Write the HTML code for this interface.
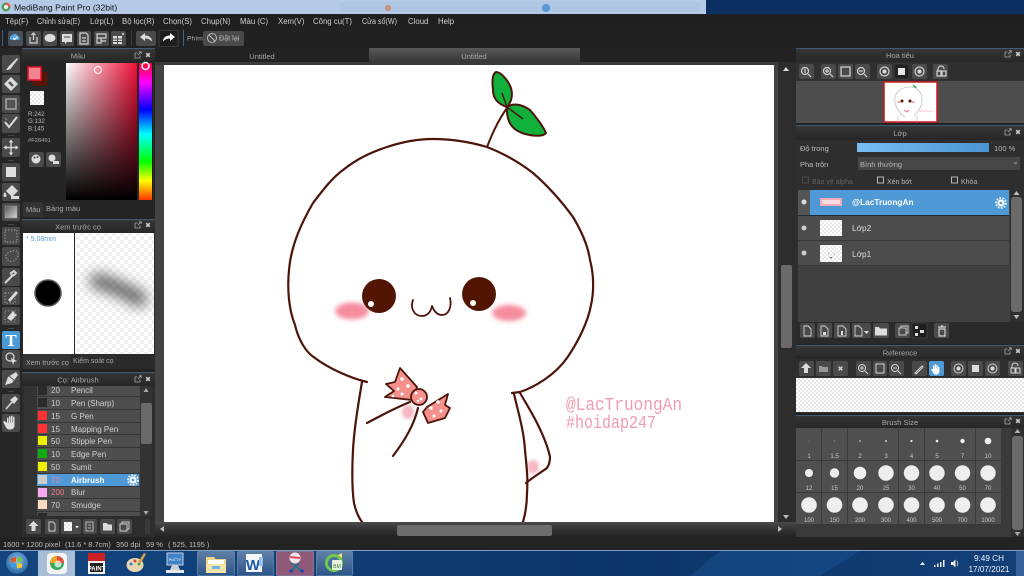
<!DOCTYPE html>
<html><head><meta charset="utf-8"><title>MediBang Paint Pro</title>
<style>
html,body{margin:0;padding:0;background:#222;width:1024px;height:576px;overflow:hidden}
svg{display:block;filter:blur(.35px)}
text{font-family:"Liberation Sans","Noto Sans CJK SC",sans-serif;font-size:7.5px;fill:#c8c8c8}
.m text{font-size:7.8px;fill:#cfcfcf}
.t{text-anchor:middle;fill:#a8a8a8}
.i{fill:none;stroke:#d4d4d4;stroke-width:1.2}
.f{fill:#dcdcdc}
.b{fill:#4a4a4a}
.l text{font-size:8px;fill:#d0d0d0}
.s text{font-size:6px;fill:#c9c9c9;text-anchor:middle}
</style></head><body>
<svg width="1024" height="576" viewBox="0 0 1024 576" xmlns="http://www.w3.org/2000/svg">
<defs>
<pattern id="ck" width="8" height="8" patternUnits="userSpaceOnUse"><rect width="8" height="8" fill="#fff"/><rect width="4" height="4" fill="#f0f0f0"/><rect x="4" y="4" width="4" height="4" fill="#f0f0f0"/></pattern>
<pattern id="ck2" width="4" height="4" patternUnits="userSpaceOnUse"><rect width="4" height="4" fill="#fff"/><rect width="2" height="2" fill="#e8e8e8"/><rect x="2" y="2" width="2" height="2" fill="#e8e8e8"/></pattern>
<linearGradient id="sv" x1="0" x2="1" y1="0" y2="0"><stop offset="0" stop-color="#fff"/><stop offset="1" stop-color="#f01038"/></linearGradient>
<linearGradient id="svb" x1="0" x2="0" y1="0" y2="1"><stop offset="0" stop-color="#000" stop-opacity="0"/><stop offset="1" stop-color="#000"/></linearGradient>
<linearGradient id="hue" x1="0" x2="0" y1="0" y2="1"><stop offset="0" stop-color="#f03"/><stop offset=".14" stop-color="#f0f"/><stop offset=".34" stop-color="#00f"/><stop offset=".52" stop-color="#0ff"/><stop offset=".72" stop-color="#0f0"/><stop offset=".86" stop-color="#ff0"/><stop offset="1" stop-color="#f30"/></linearGradient>
<linearGradient id="ttl" x1="0" x2="0" y1="0" y2="1"><stop offset="0" stop-color="#3d4348"/><stop offset=".15" stop-color="#343434"/><stop offset="1" stop-color="#272727"/></linearGradient>
<linearGradient id="tab" x1="0" x2="0" y1="0" y2="1"><stop offset="0" stop-color="#5a5a5a"/><stop offset="1" stop-color="#363636"/></linearGradient>
<linearGradient id="bar" x1="0" x2="1" y1="0" y2="0"><stop offset="0" stop-color="#79bdf2"/><stop offset="1" stop-color="#4b94d2"/></linearGradient>
<linearGradient id="grd" x1="0" x2="1" y1="0" y2="1"><stop offset="0" stop-color="#555"/><stop offset="1" stop-color="#d8d8d8"/></linearGradient>
<linearGradient id="tb" x1="0" x2="1" y1="0" y2="0"><stop offset="0" stop-color="#13457f"/><stop offset=".3" stop-color="#103e76"/><stop offset=".6" stop-color="#0d3567"/><stop offset="1" stop-color="#123f77"/></linearGradient>
<linearGradient id="tbi" x1="0" x2="0" y1="0" y2="1"><stop offset="0" stop-color="#5f7fa6"/><stop offset="1" stop-color="#2c5588"/></linearGradient>
<linearGradient id="hs" x1="0" x2="0" y1="0" y2="1"><stop offset="0" stop-color="#4a4a4a"/><stop offset=".5" stop-color="#333"/><stop offset="1" stop-color="#222"/></linearGradient>
<filter id="b1" x="-50%" y="-50%" width="200%" height="200%"><feGaussianBlur stdDeviation="2.5"/></filter>
<filter id="b2" x="-60%" y="-100%" width="220%" height="300%"><feGaussianBlur stdDeviation="7"/></filter>
<filter id="b3" x="-50%" y="-50%" width="200%" height="200%"><feGaussianBlur stdDeviation="1.6"/></filter>
<radialGradient id="orb" cx=".5" cy=".4" r=".6"><stop offset="0" stop-color="#8fc7f0"/><stop offset="1" stop-color="#1f5f9f"/></radialGradient>
<g id="x"><rect x="-2.5" y="-.8" width="5" height="1.6" fill="#ccc" transform="rotate(45)"/><rect x="-2.5" y="-.8" width="5" height="1.6" fill="#ccc" transform="rotate(-45)"/></g>
<g id="pop"><path d="M-3-2H-.5M-3-2V3H2V.5M0 0L3-3M1-3.2H3.2V-1" fill="none" stroke="#aaa" stroke-width=".8"/></g>
<g id="gear"><circle r="3.6" fill="#fff"/><circle r="5" fill="none" stroke="#fff" stroke-width="1.6" stroke-dasharray="1.8 1.3"/><circle r="1.4" fill="#4f9ad6"/></g>
</defs>

<!-- base -->
<rect width="1024" height="576" fill="#222"/>

<!-- title bar -->
<rect width="706" height="14" fill="#b4cae6"/>
<rect x="706" width="318" height="14" fill="#0b2f60"/>
<rect x="340" y="2" width="360" height="10" fill="#afc6e3"/>
<circle cx="388" cy="8" r="3" fill="#d96b3a" opacity=".6"/><circle cx="546" cy="8" r="4" fill="#3f8ed6" opacity=".8"/>
<circle cx="6" cy="7" r="4.5" fill="#4aa35a"/><path d="M6 2.5A4.5 4.5 0 0 1 10.5 7H6Z" fill="#e85a4a"/><circle cx="6" cy="7" r="2" fill="#fff"/>
<text x="14" y="10.5" style="font-size:8.6px;fill:#111">MediBang Paint Pro (32bit)</text>

<!-- menu -->
<rect y="14" width="1024" height="14" fill="#1f1f1f"/>
<g class="m">
<text x="5" y="24">Tệp(F)</text><text x="37" y="24" textLength="43" lengthAdjust="spacingAndGlyphs">Chỉnh sửa(E)</text><text x="90" y="24">Lớp(L)</text><text x="122" y="24">Bộ lọc(R)</text><text x="163" y="24">Chọn(S)</text><text x="201" y="24">Chụp(N)</text><text x="240" y="24">Màu (C)</text><text x="278" y="24">Xem(V)</text><text x="313" y="24" textLength="39" lengthAdjust="spacingAndGlyphs">Công cụ(T)</text><text x="362" y="24" textLength="35" lengthAdjust="spacingAndGlyphs">Cửa sổ(W)</text><text x="408" y="24">Cloud</text><text x="438" y="24">Help</text>
</g>

<!-- toolbar -->
<rect y="28" width="1024" height="20" fill="#212121"/>
<rect x="2" y="30" width="1" height="16" fill="#3d6488"/><rect x="131" y="30" width="1" height="16" fill="#3a3a3a"/><rect x="183" y="30" width="1" height="16" fill="#3d6488"/>
<rect x="8" y="31" width="15" height="15" rx="2" fill="#48505a"/><path d="M11 40a2.5 2.5 0 0 1 1-4.600 3.400 3.400 0 0 1 6 .8 2.200 2.200 0 0 1 1 3.800z" fill="#58a5e2"/><path d="M13 38l1.600 1.500 3-3" stroke="#fff" fill="none"/>
<rect x="26" y="31" width="15" height="15" rx="2" class="b"/><path d="M30 37v6h7v-6M33.500 40v-7M31.500 35l2-2 2 2" class="i"/>
<rect x="43" y="31" width="14" height="15" rx="2" class="b"/><ellipse cx="50" cy="38" rx="5.500" ry="4" class="f"/>
<rect x="60" y="31" width="14" height="15" rx="2" class="b"/><path d="M62 34h10v8h-5l-2 2v-2h-3z" class="f"/><path d="M64 37h6" stroke="#444"/>
<rect x="77" y="31" width="14" height="15" rx="2" class="b"/><path d="M80 33h6l2 2v9h-8zM82 38h4M82 41h4" class="i"/>
<rect x="94" y="31" width="15" height="15" rx="2" class="b"/><path d="M97 34h9v4h-9zM97 38v5h4v-5M101 41h5" class="i"/>
<rect x="111" y="31" width="15" height="15" rx="2" class="b"/><path d="M113 36h9v8h-9z" class="f"/><path d="M113 39h9M113 41.500h9M117.500 36v8" stroke="#444"/><circle cx="123" cy="34" r="1" fill="#ddd"/>
<rect x="136" y="31" width="20" height="15" rx="2" class="b"/><path d="M140 37l5-4v2.500c5 0 7 3 7 6-2-2-4-3-7-3v2.500z" class="f"/>
<rect x="159" y="30.500" width="19" height="16" rx="1" fill="#1d1d1d" stroke="#555" stroke-width=".6"/><path d="M175 37l-5-4v2.500c-5 0-7 3-7 6 2-2 4-3 7-3v2.500z" fill="#fff"/>
<text x="187" y="40.500" style="font-size:6.800px;fill:#aaa">Phím</text>
<rect x="203" y="31" width="41" height="15" rx="2" class="b"/><circle cx="212" cy="38" r="4.500" fill="none" stroke="#bbb"/><path d="M209 35l6 6" stroke="#bbb"/><text x="219" y="40.500" style="font-size:7.200px;fill:#bbb">Đặt lại</text>

<!-- tabs centre -->
<rect x="155" y="48" width="641" height="14" fill="#222"/>
<text x="262" y="59" class="t">Untitled</text>
<rect x="369" y="48" width="211" height="14" fill="url(#tab)"/>
<text x="474" y="59" class="t">Untitled</text>
<rect x="155" y="62" width="641" height="475" fill="#434343"/>
<rect x="155" y="62" width="641" height="3" fill="#3a3a3a"/>
<rect x="778" y="62" width="18" height="475" fill="#2d2d2d"/>

<!-- canvas -->
<rect x="164" y="65" width="610" height="457" fill="#fff"/>
<g>
<ellipse cx="352" cy="311" rx="17" ry="8.500" fill="#f58d9e" filter="url(#b1)"/>
<ellipse cx="509" cy="313" rx="17" ry="8" fill="#f58d9e" filter="url(#b1)"/>
<ellipse cx="408" cy="412" rx="6" ry="7" fill="#f6b7c4" filter="url(#b3)"/>
<ellipse cx="533" cy="467" rx="6" ry="7" fill="#f6b7c4" filter="url(#b3)"/>
<g fill="none" stroke="#4d150a" stroke-width="2.200" stroke-linecap="round" stroke-linejoin="round">
<path d="M367 382C350 378 328 368 315 358C305 352 298 338 295 325C289 310 287 290 289 270C291 245 302 222 313 203C323 190 332 178 343 170C358 158 372 152 387 147C402 142 418 139 433 139C452 139 470 142 487 147C505 154 520 163 533 173C548 186 562 202 573 217C582 232 588 246 590 260C594 275 594 292 591 305C588 322 578 342 567 358C555 375 535 387 520 392L512 393"/>
<path d="M362 382C358 405 354 430 353 450C352 470 352 490 354 503C356 512 359 518 362 522"/>
<path d="M514 394C519 415 524 432 525 450C527 470 528 480 527 493C527 505 525 515 523 522"/>
<path d="M520 393C527 405 532 413 537 423C543 435 548 447 550 457C550 462 549 465 547 468C540 473 532 478 526 483"/>
<path d="M487 147C492 134 499 119 507 108" stroke-width="2"/>
<path d="M413 300C410 308 414 316 422 316C428 316 431 311 432 306C434 311 437 315 442 315C449 315 452 306 450 298" stroke-width="1.800"/>
<path d="M410 402C395 408 380 416 367 423"/>
<path d="M418 408C414 425 405 440 393 456"/>
</g>
<path d="M507 107C498 104 493 99 493 90C492 82 492 74 496 72C501 72 508 80 511 88C513 95 512 101 507 107Z" fill="#10b03c" stroke="#4d150a" stroke-width="2"/>
<path d="M507 107C515 102 523 105 530 110C536 117 543 126 546 133C543 137 533 136 525 134C515 131 506 125 507 107Z" fill="#10b03c" stroke="#4d150a" stroke-width="2"/>
<path d="M502 93L507 107L523 119" fill="none" stroke="#4d150a" stroke-width="1.500"/>
<circle cx="379" cy="296" r="17" fill="#521503"/><circle cx="479" cy="294" r="17" fill="#521503"/>
<circle cx="371" cy="304" r="3" fill="#fff"/><circle cx="473" cy="303" r="3" fill="#fff"/>
<!-- bow -->
<g stroke="#4d150a" stroke-width="1.800" stroke-linejoin="round" fill="#f4918d">
<path d="M400 368L417 387L412 400L385 397L394 391L386 384L395 382Z"/>
<path d="M427 407L448 394L445 405L450 408L445 418L428 423L423 412Z"/>
<circle cx="419" cy="397" r="8"/>
</g>
<g fill="#fff"><circle cx="402" cy="379" r="1.800"/><circle cx="408" cy="386" r="1.800"/><circle cx="398" cy="389" r="1.500"/><circle cx="402" cy="394" r="1.500"/><circle cx="393" cy="396" r="1.300"/><circle cx="416" cy="393" r="1.500"/><circle cx="421" cy="399" r="1.500"/><circle cx="418" cy="401" r="1.200"/><circle cx="438" cy="402" r="1.800"/><circle cx="431" cy="408" r="1.800"/><circle cx="441" cy="411" r="1.500"/><circle cx="434" cy="416" r="1.500"/></g>
<text x="566" y="410" textLength="116" lengthAdjust="spacingAndGlyphs" style="font-size:18px;fill:#f19cb0;font-family:'Liberation Mono',monospace">@LacTruongAn</text>
<text x="566" y="428" textLength="90" lengthAdjust="spacingAndGlyphs" style="font-size:18px;fill:#f19cb0;font-family:'Liberation Mono',monospace">#hoidap247</text>
</g>

<!-- canvas scrollbars -->
<rect x="155" y="522" width="641" height="15" fill="url(#hs)"/>
<rect x="397" y="525" width="155" height="11" rx="2" fill="#6d6d6d"/>
<path d="M160 529l4-3v6z" fill="#bbb"/><path d="M782 529l-4-3v6z" fill="#bbb"/>
<rect x="774" y="65" width="4" height="457" fill="#434343"/>
<rect x="781" y="265" width="11" height="83" rx="2" fill="#6a6a6a"/>
<path d="M786 67l3 4h-6z" fill="#ddd"/><path d="M786 519l3-4h-6z" fill="#bbb"/>

<!-- left tools -->
<rect y="48" width="22" height="489" fill="#262626"/>
<g class="b">
<rect x="2" y="55" width="18" height="18" rx="2"/><rect x="2" y="75" width="18" height="18" rx="2"/><rect x="2" y="95" width="18" height="18" rx="2"/><rect x="2" y="114" width="18" height="19" rx="2"/><rect x="2" y="138" width="18" height="19" rx="2"/><rect x="2" y="163" width="18" height="18" rx="2"/><rect x="2" y="183" width="18" height="18" rx="2"/><rect x="2" y="203" width="18" height="18" rx="2"/><rect x="2" y="227" width="18" height="18" rx="2"/><rect x="2" y="247" width="18" height="19" rx="2"/><rect x="2" y="268" width="18" height="18" rx="2"/><rect x="2" y="287" width="18" height="18" rx="2"/><rect x="2" y="307" width="18" height="18" rx="2"/><rect x="2" y="350" width="18" height="18" rx="2"/><rect x="2" y="370" width="18" height="18" rx="2"/><rect x="2" y="394" width="18" height="18" rx="2"/><rect x="2" y="414" width="18" height="18" rx="2"/>
</g>
<rect x="2" y="331" width="18" height="18" rx="2" fill="#4b9ad8"/>
<rect x="8" y="135" width="6" height="1" fill="#444"/><rect x="8" y="160" width="6" height="1" fill="#444"/><rect x="8" y="224" width="6" height="1" fill="#444"/><rect x="8" y="328" width="6" height="1" fill="#444"/><rect x="8" y="391" width="6" height="1" fill="#444"/>
<path d="M17 58L9 66L6 70C9 70 11 69 12 67L18 59Z" class="f"/>
<path d="M11 77L18 84L11 91L4 84Z" class="f"/><path d="M9 82L13 86" stroke="#555" stroke-width="2.500"/>
<rect x="6" y="99" width="10" height="10" fill="#555" stroke="#aaa" stroke-width="1.400"/>
<path d="M5 122L9 127L17 117" fill="none" stroke="#dcdcdc" stroke-width="2"/><path d="M5 118l2 2" stroke="#888"/>
<path d="M11 141v13M5 147.500h12" stroke="#d4d4d4" stroke-width="1.400"/><path d="M11 139.500l2.200 3h-4.400zM11 155.500l2.200-3h-4.400zM3.500 147.500l3-2.200v4.400zM18.500 147.500l-3-2.200v4.400z" class="f"/>
<rect x="6" y="167" width="10" height="10" fill="#e0e0e0"/>
<path d="M6 191L12 185L18 191L12 197Z" class="f"/><path d="M5 192c-2 3-2 5 0 5s2-2 0-5" fill="#ddd"/><rect x="11" y="196" width="8" height="3" fill="#ddd"/>
<rect x="5" y="206" width="12" height="12" fill="url(#grd)" stroke="#999" stroke-width=".6"/>
<rect x="5" y="230" width="12" height="12" fill="none" stroke="#999" stroke-dasharray="1.500 1.500"/>
<path d="M6 256c0-3 6-6 10-5s2 6-1 9-9 1-9-4z" fill="none" stroke="#999" stroke-dasharray="1.500 1.500"/>
<path d="M5 283L13 275M11 273l3-2 2 2-2 2-2 1z" stroke="#d4d4d4" stroke-width="2" fill="none"/>
<rect x="5" y="293" width="10" height="10" fill="none" stroke="#999" stroke-dasharray="1.500 1.500"/><path d="M8 300l8-9 2 2-8 9z" class="f"/>
<path d="M7 318l6-7 4 4-6 6z" class="f"/><rect x="5" y="311" width="10" height="11" fill="none" stroke="#888" stroke-dasharray="1.500 1.500"/>
<text x="11" y="346" text-anchor="middle" style="font-family:'Liberation Serif',serif;font-size:17px;font-weight:bold;fill:#fff">T</text>
<circle cx="10" cy="357" r="4" fill="none" stroke="#d4d4d4" stroke-width="1.300"/><path d="M11 358l6 3-3 1-1 3z" class="f"/>
<path d="M5 385L8 377L16 372L18 375L12 383Z" class="f"/><path d="M9 376l6 5" stroke="#555"/>
<path d="M6 409L12 402" stroke="#d4d4d4" stroke-width="1.600"/><path d="M10 400l5-4 3 3-4 5z" class="f"/>
<path d="M7 423v-4.500c0-1.200 1.500-1.200 1.500 0V423h.5v-6c0-1.200 1.500-1.200 1.500 0v5.500h.5v-6c0-1.200 1.500-1.200 1.500 0v6h.5v-5c0-1.200 1.500-1.200 1.500 0v8c0 3-2 4-4.500 4s-3.500-1-4.500-3l-2-4c-.5-1.200 1-2 1.800-1z" fill="#e0e0e0"/>

<!-- colour panel -->
<rect x="22" y="48" width="133" height="170" fill="#252525"/>
<rect x="22" y="48" width="133" height="14" fill="url(#ttl)"/>
<rect x="22" y="48" width="133" height="1" fill="#3c5a76"/>
<text x="78" y="58.500" class="t">Màu</text>
<use href="#pop" x="138" y="55"/><use href="#x" x="148" y="55"/>
<rect x="33" y="72" width="14" height="14" fill="#5a1508"/>
<rect x="28" y="67" width="13" height="13" fill="#f28491" stroke="#e8102c" stroke-width="1.500"/>
<rect x="30" y="91" width="14" height="14" fill="url(#ck2)"/>
<text x="28" y="116" style="font-size:6.200px;fill:#bbb">R:242</text><text x="28" y="123" style="font-size:6.200px;fill:#bbb">G:132</text><text x="28" y="130.500" style="font-size:6.200px;fill:#bbb">B:145</text><text x="28" y="142" style="font-size:5.800px;fill:#aaa">#F28491</text>
<rect x="29" y="152" width="15" height="15" rx="2" class="b"/><circle cx="36" cy="159" r="4.500" class="f"/><circle cx="34.500" cy="157.500" r="1" fill="#444"/><circle cx="37.500" cy="157" r="1" fill="#444"/>
<rect x="46" y="152" width="15" height="15" rx="2" class="b"/><circle cx="52" cy="158" r="3.500" class="f"/><rect x="53" y="161" width="6" height="3" fill="#ddd"/>
<rect x="66" y="63" width="71" height="137" fill="url(#sv)"/>
<rect x="66" y="63" width="71" height="137" fill="url(#svb)"/>
<circle cx="98" cy="70" r="3.500" fill="none" stroke="#fff" stroke-width="1.200" opacity=".9"/>
<rect x="139" y="63" width="13" height="137" fill="url(#hue)"/>
<circle cx="145.500" cy="66" r="3.500" fill="none" stroke="#fff" stroke-width="1.500"/>
<rect x="23" y="202" width="20" height="15" fill="#333"/>
<rect x="43" y="202" width="36" height="15" fill="#2a2a2a"/>
<text x="26" y="212" style="fill:#aaa">Màu</text><text x="46" y="211" style="fill:#a8a8a8">Bảng màu</text>

<!-- brush preview -->
<rect x="22" y="219" width="133" height="150" fill="#2a2a2a"/>
<rect x="22" y="219" width="133" height="14" fill="url(#ttl)"/>
<rect x="22" y="219" width="133" height="1" fill="#3c5a76"/>
<text x="78" y="229.500" class="t">Xem trước cọ</text>
<use href="#pop" x="138" y="225"/><use href="#x" x="148" y="225"/>
<rect x="23" y="233" width="51" height="121" fill="#fff"/>
<rect x="75" y="233" width="79" height="121" fill="url(#ck)"/>
<text x="26" y="241" style="fill:#5d9bd0;font-size:7px">* 5.08mm</text>
<circle cx="48" cy="293" r="13" fill="#000" stroke="#555" stroke-width="1.500"/>
<g clip-path="none"><path d="M97 281C108 283 125 291 140 299" stroke="#444" stroke-width="15" fill="none" filter="url(#b2)" opacity=".85" stroke-linecap="round"/></g>
<rect x="23" y="354" width="47" height="15" fill="#343434"/>
<rect x="70" y="354" width="46" height="15" fill="#2c2c2c"/>
<text x="26" y="365" style="fill:#a8a8a8;font-size:7px">Xem trước cọ</text><text x="73" y="363" style="fill:#a8a8a8;font-size:7px">Kiểm soát cọ</text>

<!-- brush list -->
<rect x="22" y="372" width="133" height="165" fill="#2d2d2d"/>
<rect x="22" y="372" width="133" height="14" fill="url(#ttl)"/>
<rect x="22" y="372" width="133" height="1" fill="#3c5a76"/>
<text x="78" y="382.500" class="t">Cọ: Airbrush</text>
<use href="#pop" x="138" y="379"/><use href="#x" x="148" y="379"/>
<rect x="24" y="386" width="13" height="130" fill="#333"/>
<rect x="37" y="386" width="103" height="130" fill="#4e4e4e"/>
<g fill="#2f2f2f"><rect x="37" y="396" width="103" height=".8"/><rect x="37" y="409" width="103" height=".8"/><rect x="37" y="422" width="103" height=".8"/><rect x="37" y="434" width="103" height=".8"/><rect x="37" y="447" width="103" height=".8"/><rect x="37" y="460" width="103" height=".8"/><rect x="37" y="473" width="103" height=".8"/><rect x="37" y="486" width="103" height=".8"/><rect x="37" y="498" width="103" height=".8"/><rect x="37" y="511" width="103" height=".8"/></g>
<rect x="37" y="474" width="102" height="12" fill="#4f9ad6"/>
<g>
<rect x="38" y="386" width="9" height="9" fill="#2c2c2c"/><rect x="38" y="398" width="9" height="9" fill="#2a2a2a"/><rect x="38" y="411" width="9" height="9" fill="#f33"/><rect x="38" y="424" width="9" height="9" fill="#f33"/><rect x="38" y="436" width="9" height="9" fill="#ee0"/><rect x="38" y="449" width="9" height="9" fill="#1a1"/><rect x="38" y="462" width="9" height="9" fill="#ee0"/><rect x="38" y="475" width="9" height="9" fill="#ccc"/><rect x="38" y="488" width="9" height="9" fill="#f8a8f0"/><rect x="38" y="500" width="9" height="9" fill="#fadcc0"/><rect x="38" y="513" width="9" height="3" fill="#2a2a2a"/>
</g>
<g class="l">
<text x="51" y="393">20</text><text x="71" y="393">Pencil</text>
<text x="51" y="406">10</text><text x="71" y="406">Pen (Sharp)</text>
<text x="51" y="419">15</text><text x="71" y="419">G Pen</text>
<text x="51" y="432">15</text><text x="71" y="432">Mapping Pen</text>
<text x="51" y="444">50</text><text x="71" y="444">Stipple Pen</text>
<text x="51" y="457">10</text><text x="71" y="457">Edge Pen</text>
<text x="51" y="470">50</text><text x="71" y="470">Sumit</text>
<text x="51" y="483" style="fill:#f080a8">70</text><text x="71" y="483" style="fill:#fff;font-weight:bold">Airbrush</text>
<text x="51" y="495" style="fill:#f07a88">200</text><text x="71" y="495">Blur</text>
<text x="51" y="508">70</text><text x="71" y="508">Smudge</text>
</g>
<use href="#gear" x="133" y="480"/>
<rect x="140" y="386" width="12" height="130" fill="#333"/>
<rect x="141" y="403" width="11" height="41" rx="2" fill="#6a6a6a"/>
<path d="M146 388l2.500 4h-5zM146 515l2.500-4h-5z" fill="#aaa"/>
<rect x="26" y="519" width="15" height="15" rx="2" class="b"/><path d="M33.500 521l-5 5h3v5h4v-5h3z" class="f"/>
<rect x="45" y="519" width="14" height="15" rx="2" class="b"/><path d="M49 522h4l2 2v7h-6z" class="i" style="stroke-width:.9"/>
<rect x="61" y="519" width="20" height="15" rx="2" class="b"/><rect x="64" y="522" width="8" height="9" fill="url(#ck2)"/><path d="M75 526h4l-2 2.500z" fill="#ddd"/>
<rect x="83" y="519" width="14" height="15" rx="2" class="b"/><path d="M86 522h7v9h-7zM88 525h3M88 528h3" class="i" style="stroke-width:.8"/>
<rect x="100" y="519" width="15" height="15" rx="2" class="b"/><path d="M103 523h4l1 1.500h4v6h-9z" class="f"/>
<rect x="117" y="519" width="15" height="15" rx="2" class="b"/><path d="M120 524h7v7h-7zM122 524v-2h7v7h-2" class="i" style="stroke-width:.9"/>
<rect x="145" y="519" width="5" height="15" rx="1" fill="#3a3a3a"/>

<!-- status bar -->
<rect y="537" width="1024" height="13" fill="#232323"/>
<text x="3" y="547" style="font-size:7.400px;fill:#bdbdbd">1600 * 1200 pixel</text>
<text x="65" y="547" style="font-size:7.400px;fill:#bdbdbd">(11.6 * 8.7cm)</text>
<text x="116" y="547" style="font-size:7.400px;fill:#bdbdbd">350 dpi</text>
<text x="146" y="547" style="font-size:7.400px;fill:#bdbdbd">59 %</text>
<text x="168" y="547" style="font-size:7.400px;fill:#bdbdbd">( 525, 1195 )</text>

<!-- right: navigator -->
<rect x="796" y="48" width="228" height="489" fill="#232323"/>
<rect x="796" y="48" width="228" height="14" fill="url(#ttl)"/>
<rect x="796" y="48" width="228" height="1" fill="#3c5a76"/>
<text x="900" y="58" class="t">Hoa tiêu</text>
<use href="#pop" x="1008" y="54"/><use href="#x" x="1018" y="54"/>
<rect x="796" y="62" width="228" height="19" fill="#303030"/>
<g class="b"><rect x="799" y="64" width="15" height="15" rx="2"/><rect x="821" y="64" width="15" height="15" rx="2"/><rect x="838" y="64" width="15" height="15" rx="2"/><rect x="855" y="64" width="15" height="15" rx="2"/><rect x="877" y="64" width="15" height="15" rx="2"/><rect x="912" y="64" width="15" height="15" rx="2"/><rect x="933" y="64" width="15" height="15" rx="2"/></g>
<rect x="894" y="64" width="15" height="15" rx="1" fill="#222" stroke="#555" stroke-width=".5"/>
<g class="i"><circle cx="805" cy="71" r="3.500"/><path d="M808 74l3 3M805 69v4"/><circle cx="827" cy="71" r="3.500"/><path d="M830 74l3 3M825 71h4M827 69v4"/><rect x="841" y="67" width="9" height="9"/><circle cx="861" cy="71" r="3.500"/><path d="M864 74l3 3M859 71h4"/><circle cx="884.500" cy="71.500" r="4.500"/><circle cx="919.500" cy="71.500" r="4.500"/><rect x="937" y="71" width="4" height="5"/><rect x="942" y="71" width="4" height="5"/><path d="M938 71v-2a3 3 0 0 1 6 0"/></g>
<circle cx="884.500" cy="71.500" r="2" class="f"/><circle cx="919.500" cy="71.500" r="2" class="f"/>
<rect x="898" y="68" width="7" height="7" fill="#e8e8e8"/>
<rect x="796" y="81" width="228" height="42" fill="#4d4d4d"/>
<rect x="884" y="82" width="53" height="40" fill="#fff" stroke="#d0151e" stroke-width="1.500"/>
<g fill="none" stroke="#b9aca9" stroke-width=".6"><path d="M905 117C898 112 894 105 895 97C897 90 903 87 910 87C917 87 922 92 922 100C922 107 918 112 914 116"/><path d="M898 116V122M917 116V122"/></g>
<path d="M912 84l3 4 2-1z" fill="#12a83a"/>
<circle cx="902" cy="101" r="1.500" fill="#521503"/><circle cx="910" cy="101" r="1.500" fill="#521503"/>
<ellipse cx="899" cy="102" rx="2" ry="1" fill="#f7a5b0"/><ellipse cx="913" cy="102" rx="2" ry="1" fill="#f7a5b0"/><path d="M904 110l3 2 2-2" stroke="#e68" fill="none" stroke-width="1"/><text x="919" y="112" style="font-size:2.500px;fill:#f3a3b5">@LacTruong</text>

<!-- right: layer -->
<rect x="796" y="125" width="228" height="219" fill="#2e2e2e"/>
<rect x="796" y="125" width="228" height="15" fill="url(#ttl)"/>
<rect x="796" y="125" width="228" height="1" fill="#3c5a76"/>
<text x="900" y="136" class="t">Lớp</text>
<use href="#pop" x="1008" y="132"/><use href="#x" x="1018" y="132"/>
<text x="800" y="151" style="fill:#bcbcbc">Độ trong</text>
<rect x="857" y="143" width="132" height="9" fill="url(#bar)"/>
<text x="994" y="151" style="fill:#b5b5b5">100 %</text>
<text x="800" y="167" style="fill:#bcbcbc">Pha trộn</text>
<rect x="858" y="157" width="162" height="13" rx="1" fill="#464646"/>
<text x="860" y="167" style="fill:#b5b5b5">Bình thường</text>
<path d="M1013 162h5l-2.500 3z" fill="#777"/>
<rect x="802.500" y="177" width="6" height="6" fill="none" stroke="#4a4a4a"/><text x="812" y="184" style="fill:#636363;font-size:7px">Bảo vệ alpha</text>
<rect x="877.500" y="177" width="6" height="6" fill="none" stroke="#b5b5b5"/><text x="887" y="184" style="fill:#b5b5b5;font-size:7px">Xén bớt</text>
<rect x="951.500" y="177" width="6" height="6" fill="none" stroke="#b5b5b5"/><text x="961" y="184" style="fill:#b5b5b5;font-size:7px">Khóa</text>
<rect x="798" y="190" width="212" height="132" fill="#404040"/>
<rect x="798" y="190" width="12" height="25" fill="#555"/>
<rect x="810" y="190" width="199" height="25" fill="#4f9ad6"/>
<rect x="798" y="216" width="211" height="24" fill="#4c4c4c"/><rect x="798" y="241" width="211" height="24" fill="#4c4c4c"/>
<rect x="798" y="215" width="211" height="1" fill="#1f2b35"/><rect x="798" y="240" width="211" height="1" fill="#383838"/><rect x="798" y="265" width="211" height="1" fill="#383838"/>
<circle cx="804" cy="202" r="2.500" fill="#ddd"/><circle cx="804" cy="228" r="2.500" fill="#ccc"/><circle cx="804" cy="253" r="2.500" fill="#ccc"/>
<rect x="820" y="198" width="22" height="8" fill="#f3aab8"/><rect x="822" y="200" width="18" height="4" fill="#fbdbe2"/>
<rect x="820" y="220" width="22" height="16" fill="url(#ck2)"/><rect x="820" y="245" width="22" height="17" fill="url(#ck2)"/>
<path d="M828 254h1M834 254h1M830 257l1 1 1-1" stroke="#654" stroke-width=".8" fill="none"/>
<text x="852" y="205" style="font-size:8.300px;font-weight:bold;fill:#fff">@LacTruongAn</text>
<text x="852" y="231" style="font-size:8.300px;fill:#ddd">Lớp2</text><text x="852" y="257" style="font-size:8.300px;fill:#ddd">Lớp1</text>
<use href="#gear" x="1001" y="203"/>
<rect x="1010" y="190" width="12" height="132" fill="#2f2f2f"/>
<rect x="1011" y="197" width="11" height="115" rx="3" fill="#6a6a6a"/>
<path d="M1016.500 191l3 4h-6zM1016.500 319l3-4h-6z" fill="#bbb"/>
<rect x="796" y="322" width="228" height="22" fill="#2a2a2a"/>
<g class="b"><rect x="800" y="323" width="15" height="15" rx="2"/><rect x="817" y="323" width="15" height="15" rx="2"/><rect x="834" y="323" width="16" height="15" rx="2"/><rect x="852" y="323" width="19" height="15" rx="2"/><rect x="873" y="323" width="16" height="15" rx="2"/><rect x="895" y="323" width="15" height="15" rx="2"/><rect x="934" y="323" width="15" height="15" rx="2"/></g>
<rect x="912" y="323" width="15" height="15" rx="1" fill="#1f1f1f" stroke="#555" stroke-width=".5"/>
<g class="i" style="stroke-width:.9"><path d="M804 326h4l3 3v7h-7z"/><path d="M821 326h4l3 3v7h-7z"/><path d="M838 326h5l3 3v7h-8z"/><path d="M855 326h4l3 3v7h-7z"/><rect x="899" y="328" width="7" height="7"/><path d="M901 328v-2h7v7h-2"/></g>
<path d="M823 332h3v3h-3zM841 331h2v4h-2z" class="f"/><path d="M864 331h5l-2.500 3z" class="f"/>
<path d="M875 327h4l1 1.500h7v7h-12z" class="f"/>
<path d="M915 326h3v3h-3zM915 333h3v3h-3zM920 330h4v3h-4z" class="f"/>
<path d="M938 327h8M939 329h6v7h-6zM941 326h2" class="i"/>

<!-- right: reference -->
<rect x="796" y="345" width="228" height="68" fill="#2f2f2f"/>
<rect x="796" y="345" width="228" height="14" fill="url(#ttl)"/>
<rect x="796" y="345" width="228" height="1" fill="#3c5a76"/>
<text x="900" y="355.500" class="t">Reference</text>
<use href="#pop" x="1008" y="351"/><use href="#x" x="1018" y="351"/>
<g class="b"><rect x="799" y="361" width="15" height="15" rx="2"/><rect x="816" y="361" width="15" height="15" rx="2"/><rect x="833" y="361" width="15" height="15" rx="2"/><rect x="856" y="361" width="15" height="15" rx="2"/><rect x="873" y="361" width="14" height="15" rx="2"/><rect x="889" y="361" width="15" height="15" rx="2"/><rect x="912" y="361" width="15" height="15" rx="2"/><rect x="951" y="361" width="15" height="15" rx="2"/><rect x="968" y="361" width="15" height="15" rx="2"/><rect x="985" y="361" width="15" height="15" rx="2"/><rect x="1008" y="361" width="15" height="15" rx="2"/></g>
<rect x="929" y="361" width="15" height="15" rx="2" fill="#4f9ad6"/>
<path d="M806 363l-5 5h3v5h4v-5h3z" class="f"/><path d="M819 366h3l1 1h5v5h-9z" fill="#999"/>
<use href="#x" x="840.500" y="368.500"/>
<g class="i" style="stroke-width:1"><circle cx="862" cy="368" r="3.500"/><path d="M865 371l3 3M860 368h4M862 366v4"/><rect x="876" y="364" width="8" height="9"/><circle cx="895" cy="368" r="3.500"/><path d="M898 371l3 3M893 368h4"/><path d="M915 373l7-7 1 1-7 7z"/><circle cx="958.500" cy="368.500" r="4.500"/><circle cx="992.500" cy="368.500" r="4.500"/><rect x="1011" y="368" width="4" height="5"/><rect x="1016" y="368" width="4" height="5"/><path d="M1012 368v-2a3 3 0 0 1 6 0"/></g>
<circle cx="958.500" cy="368.500" r="2" class="f"/><circle cx="992.500" cy="368.500" r="2" class="f"/><rect x="972" y="365" width="7" height="7" class="f"/>
<path d="M933 369v-3c0-1 1.300-1 1.300 0v2h.4v-3c0-1 1.300-1 1.300 0v3h.4v-2.500c0-1 1.300-1 1.300 0V369h.4v-1.500c0-1 1.300-1 1.300 0v4c0 2-1.500 3-3.500 3s-2.500-1-3-2l-1.500-2.500c-.5-1 .8-1.500 1.500-.8z" fill="#fff"/>
<rect x="796" y="378" width="228" height="34" fill="url(#ck2)"/>

<!-- right: brush size -->
<rect x="796" y="415" width="228" height="122" fill="#3a3a3a"/>
<rect x="796" y="415" width="228" height="13" fill="url(#ttl)"/>
<rect x="796" y="415" width="228" height="1" fill="#3c5a76"/>
<text x="900" y="425" class="t">Brush Size</text>
<use href="#pop" x="1008" y="421"/><use href="#x" x="1018" y="421"/>
<rect x="1011" y="428" width="13" height="109" fill="#2f2f2f"/>
<rect x="1012" y="436" width="11" height="94" rx="3" fill="#6a6a6a"/>
<path d="M1017.500 429l3 4h-6zM1017.500 536l3-4h-6z" fill="#aaa"/>
<g fill="#4f4f4f">
<rect x="796" y="428" width="25" height="32"/><rect x="822" y="428" width="25" height="32"/><rect x="848" y="428" width="25" height="32"/><rect x="873" y="428" width="25" height="32"/><rect x="899" y="428" width="25" height="32"/><rect x="925" y="428" width="25" height="32"/><rect x="950" y="428" width="25" height="32"/><rect x="976" y="428" width="25" height="32"/>
<rect x="796" y="461" width="25" height="31"/><rect x="822" y="461" width="25" height="31"/><rect x="848" y="461" width="25" height="31"/><rect x="873" y="461" width="25" height="31"/><rect x="899" y="461" width="25" height="31"/><rect x="925" y="461" width="25" height="31"/><rect x="950" y="461" width="25" height="31"/><rect x="976" y="461" width="25" height="31"/>
<rect x="796" y="493" width="25" height="31"/><rect x="822" y="493" width="25" height="31"/><rect x="848" y="493" width="25" height="31"/><rect x="873" y="493" width="25" height="31"/><rect x="899" y="493" width="25" height="31"/><rect x="925" y="493" width="25" height="31"/><rect x="950" y="493" width="25" height="31"/><rect x="976" y="493" width="25" height="31"/>
</g>
<g fill="#eee">
<circle cx="809" cy="441" r=".3"/><circle cx="834.500" cy="441" r=".4"/><circle cx="860" cy="441" r=".7"/><circle cx="886" cy="441" r=".9"/><circle cx="911.500" cy="441" r="1.100"/><circle cx="937" cy="441" r="1.300"/><circle cx="962.500" cy="441" r="2.200"/><circle cx="988" cy="441" r="3.300"/>
<circle cx="809" cy="473" r="4"/><circle cx="834.500" cy="473" r="4.700"/><circle cx="860" cy="473" r="6.300"/><circle cx="886" cy="473" r="7.700"/><circle cx="911.500" cy="473" r="7.700"/><circle cx="937" cy="473" r="7.700"/><circle cx="962.500" cy="473" r="7.700"/><circle cx="988" cy="473" r="7.700"/>
<circle cx="809" cy="505" r="7.800"/><circle cx="834.500" cy="505" r="7.800"/><circle cx="860" cy="505" r="7.800"/><circle cx="886" cy="505" r="7.800"/><circle cx="911.500" cy="505" r="7.800"/><circle cx="937" cy="505" r="7.800"/><circle cx="962.500" cy="505" r="7.800"/><circle cx="988" cy="505" r="7.800"/>
</g>
<g class="s">
<text x="809" y="458">1</text><text x="834.500" y="458">1.5</text><text x="860" y="458">2</text><text x="886" y="458">3</text><text x="911.500" y="458">4</text><text x="937" y="458">5</text><text x="962.500" y="458">7</text><text x="988" y="458">10</text>
<text x="809" y="490">12</text><text x="834.500" y="490">15</text><text x="860" y="490">20</text><text x="886" y="490">25</text><text x="911.500" y="490">30</text><text x="937" y="490">40</text><text x="962.500" y="490">50</text><text x="988" y="490">70</text>
<text x="809" y="522">100</text><text x="834.500" y="522">150</text><text x="860" y="522">200</text><text x="886" y="522">300</text><text x="911.500" y="522">400</text><text x="937" y="522">500</text><text x="962.500" y="522">700</text><text x="988" y="522">1000</text>
</g>

<!-- taskbar -->
<rect y="550" width="1024" height="26" fill="url(#tb)"/>
<rect y="550" width="1024" height="1" fill="#7f9fc4"/>
<path d="M720 551h140l-40 25H690z" fill="#1a5292" opacity=".5"/>
<circle cx="17" cy="563" r="11.500" fill="url(#orb)" stroke="#173d68"/>
<path d="M11 558l5-1v5l-5 .5z" fill="#e8562f"/><path d="M17 557l5 1v4l-5-.5z" fill="#7cc13f"/><path d="M11 563.500l5-.5v5l-5-1z" fill="#3c9ae0"/><path d="M17 563l5 .5v4l-5 1z" fill="#f2c531"/>
<rect x="38" y="551" width="37" height="25" fill="#a9bdd6"/>
<rect x="47" y="553" width="20" height="21" rx="4" fill="#f4f4f4"/>
<circle cx="57" cy="563" r="7" fill="#3aa85a"/><path d="M57 556a7 7 0 0 1 7 7h-7z" fill="#e84c3d"/><path d="M50 563a7 7 0 0 1 7-7v7z" fill="#f4a323"/><circle cx="58" cy="564" r="3.500" fill="#fff" opacity=".7"/>
<rect x="88" y="553" width="17" height="21" fill="#f0f0f0"/><rect x="88" y="553" width="17" height="8" fill="#c22"/><rect x="90" y="563" width="13" height="9" fill="#222"/><text x="96.500" y="570.500" text-anchor="middle" style="font-size:6px;font-weight:bold;fill:#fff">PAINT</text>
<ellipse cx="135" cy="565" rx="8.500" ry="7" fill="#e9d6b0"/><circle cx="131" cy="564" r="1.500" fill="#3a7fd0"/><circle cx="135" cy="561" r="1.500" fill="#e04040"/><circle cx="139" cy="564" r="1.500" fill="#40b040"/><path d="M138 562l6-9 2 1-5 9z" fill="#d9a441"/>
<rect x="167" y="553" width="16" height="12" fill="#3f83c9" stroke="#ccd"/><path d="M172 565h6l2 5h-10z" fill="#c9d0dc"/><rect x="166" y="570" width="18" height="3" fill="#e4e8ee"/><text x="175" y="561" text-anchor="middle" style="font-size:4px;fill:#fff">PuTTY</text>
<g fill="url(#tbi)" stroke="#7e9bbd" stroke-width=".6"><rect x="197.500" y="551.500" width="37" height="24" rx="1"/><rect x="237.500" y="551.500" width="36" height="24" rx="1"/><rect x="316.500" y="551.500" width="36" height="24" rx="1"/></g>
<rect x="276.500" y="551.500" width="37" height="24" rx="1" fill="#8e5a78" stroke="#b793a9" stroke-width=".6"/>
<path d="M206 557h8l1.500 2H226v14h-20z" fill="#f0d68a"/><rect x="208" y="560" width="16" height="4" fill="#fff"/><path d="M206 564h20l-1 9h-18z" fill="#f6e4a8"/><rect x="212" y="566" width="8" height="3" fill="#6fb3e0"/>
<rect x="246" y="554" width="16" height="18" fill="#f4f6f9"/><text x="253" y="570" text-anchor="middle" style="font-size:15px;font-weight:bold;fill:#1c57a8">W</text><rect x="259" y="557" width="4" height="9" fill="#9cc1e8"/>
<circle cx="295" cy="558" r="5.500" fill="#f1e7ea"/><path d="M290 557l10 1" stroke="#e04860" stroke-width="2"/><path d="M291 563l11 8M299 563l-7 8" stroke="#2b6e8a" stroke-width="2"/><circle cx="291" cy="571" r="1.800" fill="#24a"/><circle cx="302" cy="571" r="1.800" fill="#24a"/>
<circle cx="334" cy="563" r="7.500" fill="none" stroke="#6ecb4a" stroke-width="3"/><rect x="332" y="560" width="10" height="10" rx="1" fill="#e8f3df"/><text x="337" y="568" text-anchor="middle" style="font-size:5px;fill:#2c7d2c">BM</text><path d="M338 555l4-2v5z" fill="#f3e46a"/>

<!-- tray -->
<path d="M920 565l2.500-3 2.500 3z" fill="#eee"/>
<g fill="#eee"><rect x="934" y="565" width="1.500" height="2"/><rect x="937" y="563.500" width="1.500" height="3.500"/><rect x="940" y="562" width="1.500" height="5"/><rect x="943" y="560" width="1.500" height="7"/></g>
<path d="M951 562h2l2.500-2.500v8L953 565h-2z" fill="#eee"/><path d="M957 561c1 1.500 1 3.500 0 5" stroke="#bbb" fill="none"/>
<text x="989" y="561" text-anchor="middle" style="font-size:8.200px;fill:#eef3f8">9:49 CH</text>
<text x="989" y="572" text-anchor="middle" style="font-size:8.200px;fill:#eef3f8">17/07/2021</text>
<rect x="1016" y="551" width="8" height="25" fill="#3f6a9d" opacity=".8"/>
</svg>
</body></html>
